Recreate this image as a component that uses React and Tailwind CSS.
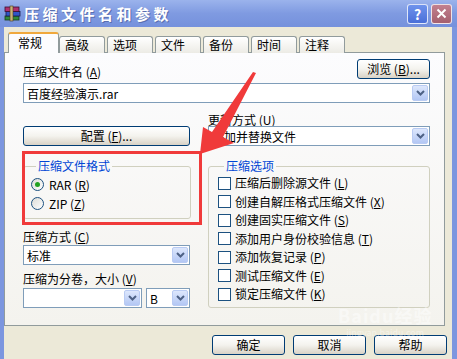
import React from 'react';

const tabs = ['高级', '选项', '文件', '备份', '时间', '注释'];

const options = [
    ['压缩后删除源文件', 'L'],
    ['创建自解压格式压缩文件', 'X'],
    ['创建固实压缩文件', 'S'],
    ['添加用户身份校验信息', 'T'],
    ['添加恢复记录', 'P'],
    ['测试压缩文件', 'E'],
    ['锁定压缩文件', 'K'],
];

const Key = ({ text, k }) => (
    <span className="whitespace-nowrap">
        {text} (<u>{k}</u>)
    </span>
);

const DropButton = () => (
    <div className="mr-px flex h-[16px] w-[16px] shrink-0 items-center justify-center rounded-[2px] border border-[#B9CBF3] bg-linear-to-b from-[#DDE7FC] to-[#B3C7F4]">
        <svg width="9" height="6" viewBox="0 0 9 6">
            <path d="M1 1l3.5 3.5L8 1" stroke="#4D6185" strokeWidth="2" fill="none" />
        </svg>
    </div>
);

const Combo = ({ value, className = '' }) => (
    <div className={`flex h-[20px] items-center border border-[#7F9DB9] bg-white ${className}`}>
        <span className="flex-1 whitespace-nowrap pl-[3px] text-[12px] leading-[17px]">{value}</span>
        <DropButton />
    </div>
);

const XpButton = ({ children, className = '' }) => (
    <button className={`flex h-[20px] items-center justify-center rounded-[3px] border border-[#003C74] bg-linear-to-b from-white via-[#F4F3EE] to-[#D8D2C6] text-[12px] leading-none text-black ${className}`}>
        {children}
    </button>
);

const Radio = ({ checked, children }) => (
    <div className="flex h-[19px] items-center gap-[5px]">
        <span className="flex h-[13px] w-[13px] items-center justify-center rounded-full border border-[#1C5180] bg-linear-to-br from-[#DCDCD7] to-white">
            {checked && <span className="h-[5px] w-[5px] rounded-full bg-[#21A121]" />}
        </span>
        <span className="text-[12px] leading-[14px]">{children}</span>
    </div>
);

const Check = ({ text, k }) => (
    <div className="flex h-[18.5px] items-center gap-[4px]">
        <span className="h-[13px] w-[13px] border border-[#1C5180] bg-white" />
        <span className="text-[12px] leading-[14px]">
            <Key text={text} k={k} />
        </span>
    </div>
);

const RarIcon = () => (
    <svg width="17" height="17" viewBox="0 0 17 17">
        <rect x="1" y="11" width="14" height="4" fill="#2E8B3A" stroke="#1A3A1A" strokeWidth="0.8" />
        <rect x="2" y="6.5" width="14" height="4.5" fill="#3055C8" stroke="#1A1A4A" strokeWidth="0.8" />
        <rect x="1" y="2" width="14" height="4.5" fill="#B0306E" stroke="#3A1030" strokeWidth="0.8" />
        <rect x="6" y="1" width="3" height="15" fill="#C9B27A" stroke="#4A3A1A" strokeWidth="0.6" />
    </svg>
);

export default function App() {
    return (
        <main className="relative h-[359px] w-[457px] overflow-hidden bg-[#ECE9D8] font-['Noto_Sans_CJK_SC',sans-serif] text-black">
            {/* title bar */}
            <div className="flex h-[27px] items-center bg-linear-to-b from-[#9BB3EC] via-[#7F9AE1] to-[#7591DC] pl-[4px] pr-[5px]">
                <RarIcon />
                <span className="ml-[3px] text-[15px] font-bold leading-none tracking-[3.5px] text-white [text-shadow:1px_1px_0_#5A6FB0]">
                    压缩文件名和参数
                </span>
                <div className="ml-auto flex gap-[3px]">
                    <div className="flex h-[20px] w-[21px] items-center justify-center rounded-[3px] border border-white/80 bg-linear-to-b from-[#6F93EC] to-[#4A6FD8] text-[14px] font-bold leading-none text-white">
                        ?
                    </div>
                    <div className="flex h-[20px] w-[21px] items-center justify-center rounded-[3px] border border-white/80 bg-linear-to-b from-[#C2808F] to-[#A5606F]">
                        <svg width="11" height="11" viewBox="0 0 11 11">
                            <path d="M1.5 1.5l8 8M9.5 1.5l-8 8" stroke="white" strokeWidth="2" />
                        </svg>
                    </div>
                </div>
            </div>

            <div className="flex h-[332px]">
                <div className="w-[4px] bg-[#7C96DF]" />
                <div className="flex flex-1 flex-col">
                    {/* tabs */}
                    <div className="relative z-10 -mb-px flex h-[26px] items-end pl-[4px] pt-[5px]">
                        <div className="h-[21px] w-[51px] rounded-t-[3px] border-x border-t-2 border-x-[#919B9C] border-t-[#F0A83C] bg-[#FCFCFE] pl-[9px] text-[12px] leading-[17px]">
                            常规
                        </div>
                        {tabs.map((t, i) => (
                            <div
                                key={t}
                                className={`h-[17px] w-[46px] rounded-t-[3px] border-x border-t border-[#919B9C] bg-linear-to-b from-white to-[#ECEBE5] pl-[5px] text-[12px] leading-[16px] ${i === 0 ? 'ml-0' : 'ml-[2px]'}`}
                            >
                                {t}
                            </div>
                        ))}
                    </div>

                    {/* panel */}
                    <div className="mr-[7px] h-[274px] border border-[#919B9C] bg-linear-to-b from-[#FCFCFE] to-[#F4F3EE] pl-[18px] pr-[14px] pt-[8px]">
                        <div className="flex h-[18px] items-end justify-between">
                            <span className="text-[12px] leading-[14px]">
                                <Key text="压缩文件名" k="A" />
                            </span>
                            <XpButton className="h-[18px] w-[73px]">
                                <Key text="浏览" k="B" />...
                            </XpButton>
                        </div>
                        <Combo value="百度经验演示.rar" className="mt-[4px]" />

                        <div className="mt-[10px] flex gap-[18px]">
                            <div className="flex w-[167px] flex-col justify-end">
                                <XpButton className="w-full">
                                    <Key text="配置" k="F" />...
                                </XpButton>
                            </div>
                            <div className="flex flex-1 flex-col">
                                <span className="text-[12px] leading-[13px]">
                                    <Key text="更新方式" k="U" />
                                </span>
                                <Combo value="添加并替换文件" />
                            </div>
                        </div>

                        <div className="mt-[13px] flex gap-[17px]">
                            <div className="flex w-[168px] flex-col">
                                <fieldset className="rounded-[3px] border border-[#D0D0BF] pb-[5px] pl-[7px] pt-[2px]">
                                    <legend className="ml-[5px] px-[2px] text-[12px] leading-[14px] text-[#0046D5]">压缩文件格式</legend>
                                    <Radio checked>
                                        RAR (<u>R</u>)
                                    </Radio>
                                    <Radio>
                                        ZIP (<u>Z</u>)
                                    </Radio>
                                </fieldset>
                                <span className="mt-[11px] text-[12px] leading-[14px]">
                                    <Key text="压缩方式" k="C" />
                                </span>
                                <Combo value="标准" className="mt-px w-[167px]" />
                                <span className="mt-[7px] text-[12px] leading-[14px]">
                                    <Key text="压缩为分卷，大小" k="V" />
                                </span>
                                <div className="mt-[2px] flex gap-[4px]">
                                    <Combo value="" className="w-[119px]" />
                                    <Combo value="B" className="w-[44px]" />
                                </div>
                            </div>
                            <fieldset className="h-[149px] flex-1 rounded-[3px] border border-[#D0D0BF] pl-[9px] pt-px">
                                <legend className="ml-[6px] px-[2px] text-[12px] leading-[14px] text-[#0046D5]">压缩选项</legend>
                                {options.map(([t, k]) => (
                                    <Check key={k} text={t} k={k} />
                                ))}
                            </fieldset>
                        </div>
                    </div>

                    {/* buttons */}
                    <div className="mt-[9px] flex justify-end gap-[8px] pr-[5px]">
                        <XpButton className="w-[73px]">确定</XpButton>
                        <XpButton className="w-[73px]">取消</XpButton>
                        <XpButton className="w-[73px]">帮助</XpButton>
                    </div>
                </div>
                <div className="w-[5px] bg-[#7C96DF]" />
            </div>

            {/* watermark */}
            <div className="pointer-events-none absolute left-[338px] top-[306px] flex flex-col items-center text-white/45">
                <span className="text-[18px] font-bold leading-none tracking-[1px]">Baidu经验</span>
                <span className="mt-[4px] text-[9px] leading-none">jingyan.baidu.com</span>
            </div>

            {/* red annotation */}
            <div className="pointer-events-none absolute left-[22px] top-[151px] h-[74px] w-[180px] border-[3px] border-[#F03A3A]" />
            <svg className="pointer-events-none absolute left-0 top-0" width="457" height="359" viewBox="0 0 457 359">
                <polygon points="200,154 203,127 212,132 253,72 256,73 223,137 234,143" fill="#F03A3A" />
            </svg>
        </main>
    );
}
